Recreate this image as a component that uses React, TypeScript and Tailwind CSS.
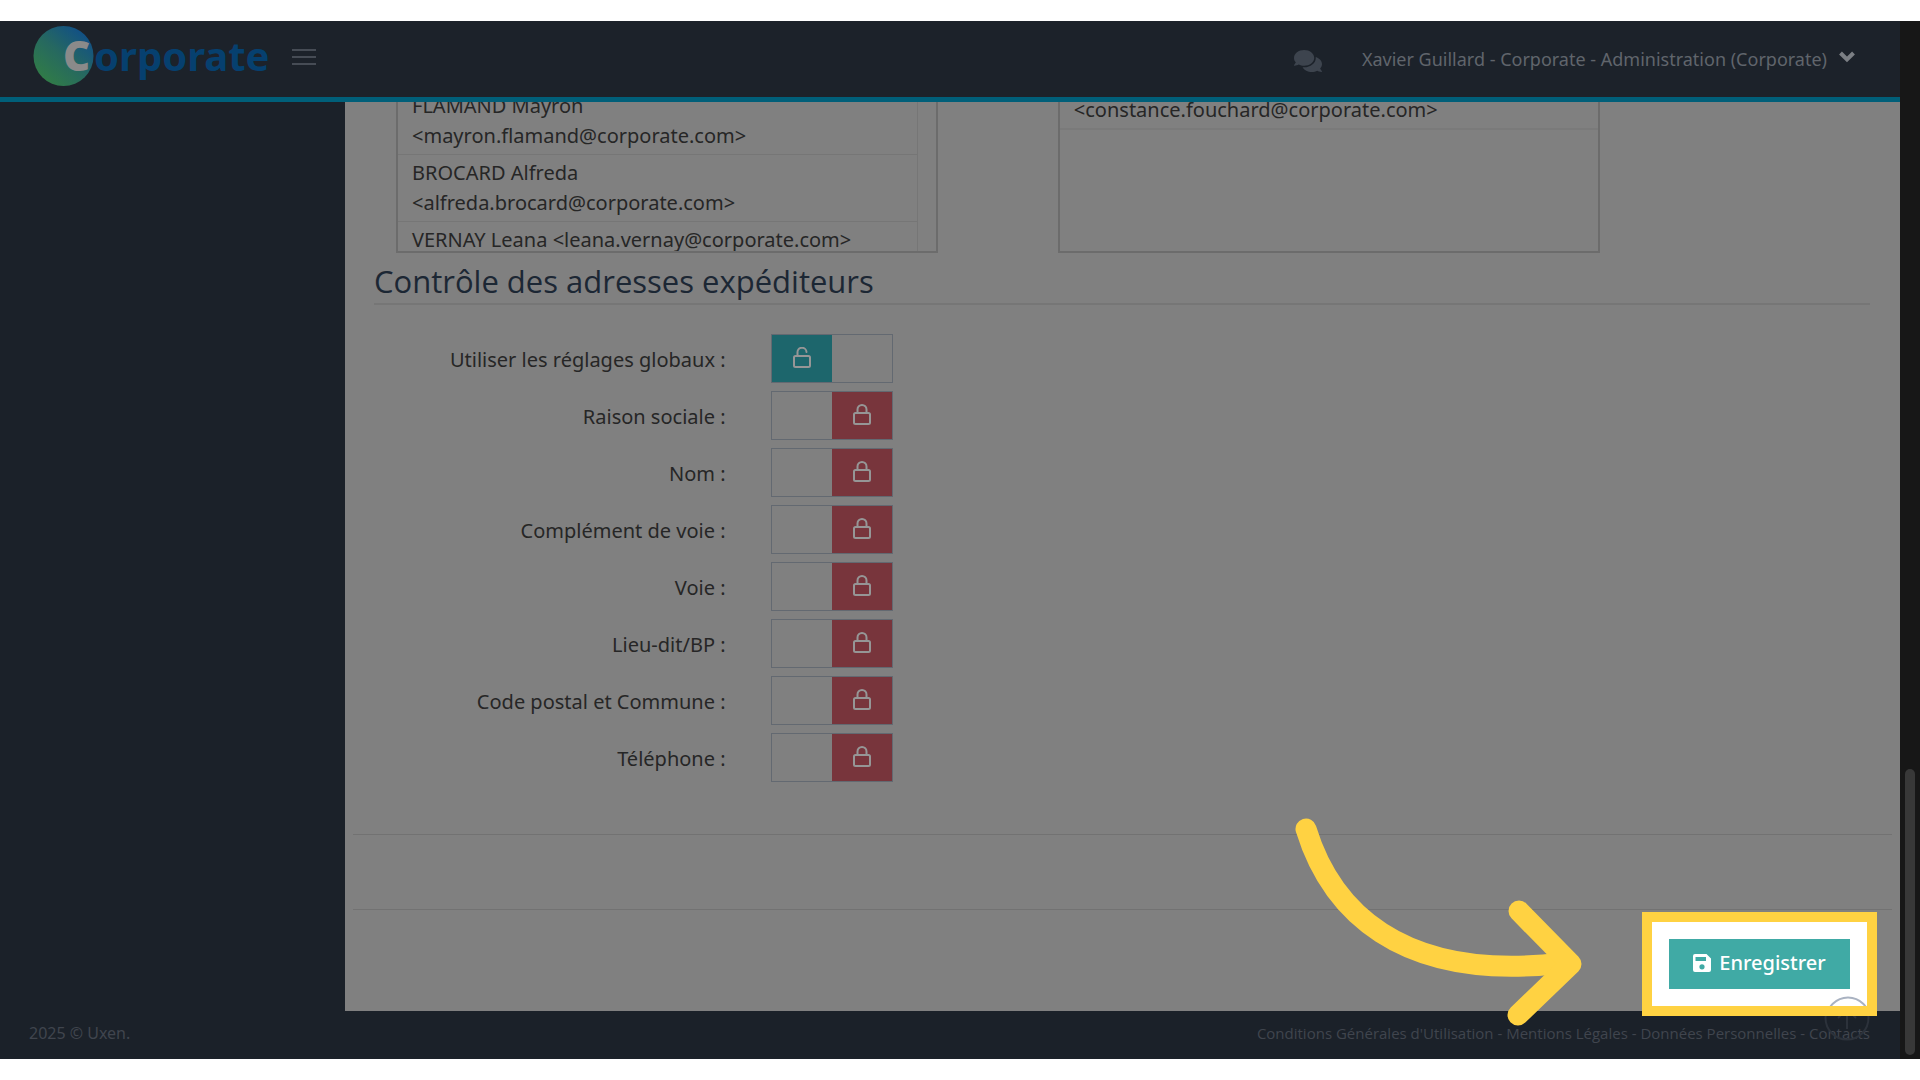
import React from "react";
import { FaComments } from "react-icons/fa";

const people = [
  { name: "FLAMAND Mayron", mail: "<mayron.flamand@corporate.com>", wrap: true },
  { name: "BROCARD Alfreda", mail: "<alfreda.brocard@corporate.com>", wrap: true },
  { name: "VERNAY Leana", mail: "<leana.vernay@corporate.com>", wrap: false },
];

const settings = [
  { id: "global", label: "Utiliser les réglages globaux :", open: true },
  { id: "company", label: "Raison sociale :", open: false },
  { id: "name", label: "Nom :", open: false },
  { id: "extra", label: "Complément de voie :", open: false },
  { id: "street", label: "Voie :", open: false },
  { id: "locality", label: "Lieu-dit/BP :", open: false },
  { id: "city", label: "Code postal et Commune :", open: false },
  { id: "phone", label: "Téléphone :", open: false },
];

const legal = ["Conditions Générales d'Utilisation", "Mentions Légales", "Données Personnelles", "Contacts"];

function Lock({ open }: { open: boolean }) {
  return (
    <svg viewBox="0 0 18 21" className="mb-0.5 h-[21px] w-[18px]" fill="none" stroke="currentColor" strokeWidth="2" strokeLinejoin="round" strokeLinecap="round">
      <rect x="1" y="9" width="16" height="11" rx="1.5" />
      <path d={open ? "M4.5 9V5.500a4.500 4.500 0 0 1 9-.5" : "M4.5 9V5.500a4.500 4.500 0 0 1 9 0V9"} />
    </svg>
  );
}

function Toggle({ id, open }: { id: string; open: boolean }) {
  return (
    <div className="relative flex h-[49px] w-[122px] border border-[#636971] text-[#969696]">
      <input id={id} type="checkbox" defaultChecked={open} className="absolute inset-0 h-full w-full cursor-pointer appearance-none" />
      <span className={open ? "flex flex-1 items-center justify-center bg-[#1d666c]" : "flex-1"}>{open && <Lock open />}</span>
      <span className={open ? "flex-1" : "flex flex-1 items-center justify-center bg-[#78353c]"}>{!open && <Lock open={false} />}</span>
    </div>
  );
}

function Logo() {
  return (
    <svg viewBox="0 0 236 64" className="mb-1.5 h-16 w-[236px]" role="img" aria-label="Corporate">
      <defs>
        <linearGradient id="disc" x1="0.2" y1="0.9" x2="0.85" y2="0.15">
          <stop offset="0" stopColor="#307b48" />
          <stop offset="0.5" stopColor="#266860" />
          <stop offset="1" stopColor="#125184" />
        </linearGradient>
      </defs>
      <circle cx="31.5" cy="32" r="30" fill="url(#disc)" />
      <text x="31" y="47" fontFamily="Noto Sans, sans-serif" fontWeight="900" fontSize="42" fill="#8a8a8a">C</text>
      <text x="62" y="47" fontFamily="Noto Sans, sans-serif" fontWeight="700" fontSize="40" fill="#06406f">orporate</text>
    </svg>
  );
}

function SaveIcon() {
  return (
    <svg viewBox="0 0 18 18" className="h-[18px] w-[18px]" fill="currentColor" fillRule="evenodd">
      <path d="M2 0h11.5L18 4.500V16a2 2 0 0 1-2 2H2a2 2 0 0 1-2-2V2a2 2 0 0 1 2-2zM2.500 3v4h10.500V3zM9 10.200a2.600 2.600 0 1 0 0 5.200a2.600 2.600 0 0 0 0-5.200z" />
    </svg>
  );
}

function UpCircle() {
  return (
    <svg viewBox="0 0 46 46" className="h-[46px] w-[46px]" fill="none" stroke="currentColor" strokeWidth="2">
      <circle cx="23" cy="23" r="21.500" />
      <path d="M23 34V13M14 23l9-9 9 9" />
    </svg>
  );
}

export default function App() {
  return (
    <div className="min-h-screen bg-white pt-[21px] pb-[21px] font-['Noto_Sans',sans-serif] text-[20px] leading-[30px] text-[#262626]">
      <div className="flex">
        <div className="min-w-0 flex-1 bg-[#1b2129]">
          <header className="flex h-[81px] items-center border-b-[5px] border-[#005f79] bg-[#1c222a] pr-[45px] pl-8">
            <Logo />
            <button aria-label="Menu" className="mb-1 ml-6 flex w-6 flex-col gap-[5px]">
              <span className="h-0.5 bg-[#464c55]" />
              <span className="h-0.5 bg-[#464c55]" />
              <span className="h-0.5 bg-[#464c55]" />
            </button>
            <button aria-label="Messages" className="mt-1 ml-auto text-[#3d444e]">
              <FaComments size={28} />
            </button>
            <button className="ml-10 flex items-center gap-3 text-[18px] text-[#60656c]">
              <span>Xavier Guillard - Corporate - Administration (Corporate)</span>
              <svg viewBox="0 0 16 12" className="mb-1 h-3 w-4" fill="none" stroke="#7b7f84" strokeWidth="4">
                <path d="M1.500 2L8 8.500 14.500 2" />
              </svg>
            </button>
          </header>

          <main className="ml-[345px] bg-[#808080]">
            <div className="pr-[30px] pl-[29px]">
              <div className="flex h-[151px] gap-[8.1%] overflow-hidden pl-[22px]">
                <div className="w-[36.8%] overflow-hidden border-x-2 border-b-2 border-[#6c6c6c] pr-[18px]">
                  <ul className="-mt-3.5 border-r border-[#767676]">
                    {people.map((p) => (
                      <li key={p.name} className="border-b border-[#767676] px-[14px] py-[3px]">
                        {p.name} {p.wrap && <br />}
                        {p.mail}
                      </li>
                    ))}
                  </ul>
                </div>
                <div className="w-[36.8%] overflow-hidden border-x-2 border-b-2 border-[#6c6c6c]">
                  <ul className="-mt-2.5">
                    <li className="border-b-2 border-[#7a7a7a] px-[14px] py-[3px]">&lt;constance.fouchard@corporate.com&gt;</li>
                  </ul>
                </div>
              </div>
              <h2 className="border-b-2 border-[#767676] pt-[9px] pb-[3px] font-['Open_Sans',sans-serif] text-[31px] leading-[38px] text-[#1c2734]">Contrôle des adresses expéditeurs</h2>
              <div className="flex flex-col gap-2 pt-[29px]">
                {settings.map((s) => (
                  <div key={s.id} className="flex items-center">
                    <label htmlFor={s.id} className="mr-[45px] w-[23.5%] pt-0.5 text-right">{s.label}</label>
                    <Toggle id={s.id} open={s.open} />
                  </div>
                ))}
              </div>
            </div>
            <div className="mx-2 mt-[52px] h-[76px] border-y border-[#727272]" />
            <div className="flex justify-end pt-[29px] pr-[50px] pb-[22px]">
              <div className="relative">
                <div className="absolute -inset-[27px] z-10 overflow-hidden border-[10px] border-[#ffd242] bg-white text-[#a9b2c1]">
                  <div className="absolute top-[74px] -right-[4px]"><UpCircle /></div>
                </div>
                <svg viewBox="0 0 290 212" className="absolute -top-[122px] right-[269px] z-10 h-[212px] w-[290px] overflow-visible" fill="none" stroke="#ffd242" strokeWidth="21" strokeLinecap="round" strokeLinejoin="round">
                  <path d="M15 12C39 90 106 166 272 146" />
                  <path d="M228 94l52 53-53 51" />
                </svg>
                <button className="relative z-20 flex h-[50px] w-[181px] items-center justify-center gap-2 bg-[#40aaa5] pb-0.5 font-medium text-white">
                  <SaveIcon />
                  Enregistrer
                </button>
              </div>
            </div>
          </main>

          <footer className="relative flex h-12 items-center justify-between pr-[30px] pb-1 pl-[29px] text-[16px] text-[#40454e]">
            <span>2025 © Uxen.</span>
            <nav className="font-['Open_Sans',sans-serif] text-[15px]">
              {legal.map((t, i) => (
                <React.Fragment key={t}>
                  {i > 0 && " - "}
                  <a href="#">{t}</a>
                </React.Fragment>
              ))}
            </nav>
            <button aria-label="Haut de page" className="absolute -top-4 right-[30px] text-[#2c323b]"><UpCircle /></button>
          </footer>
        </div>
        <div className="flex w-5 flex-col justify-end bg-[#171717] px-[5px] pb-1">
          <div className="h-[27.7%] rounded-full bg-[#383838]" />
        </div>
      </div>
    </div>
  );
}
